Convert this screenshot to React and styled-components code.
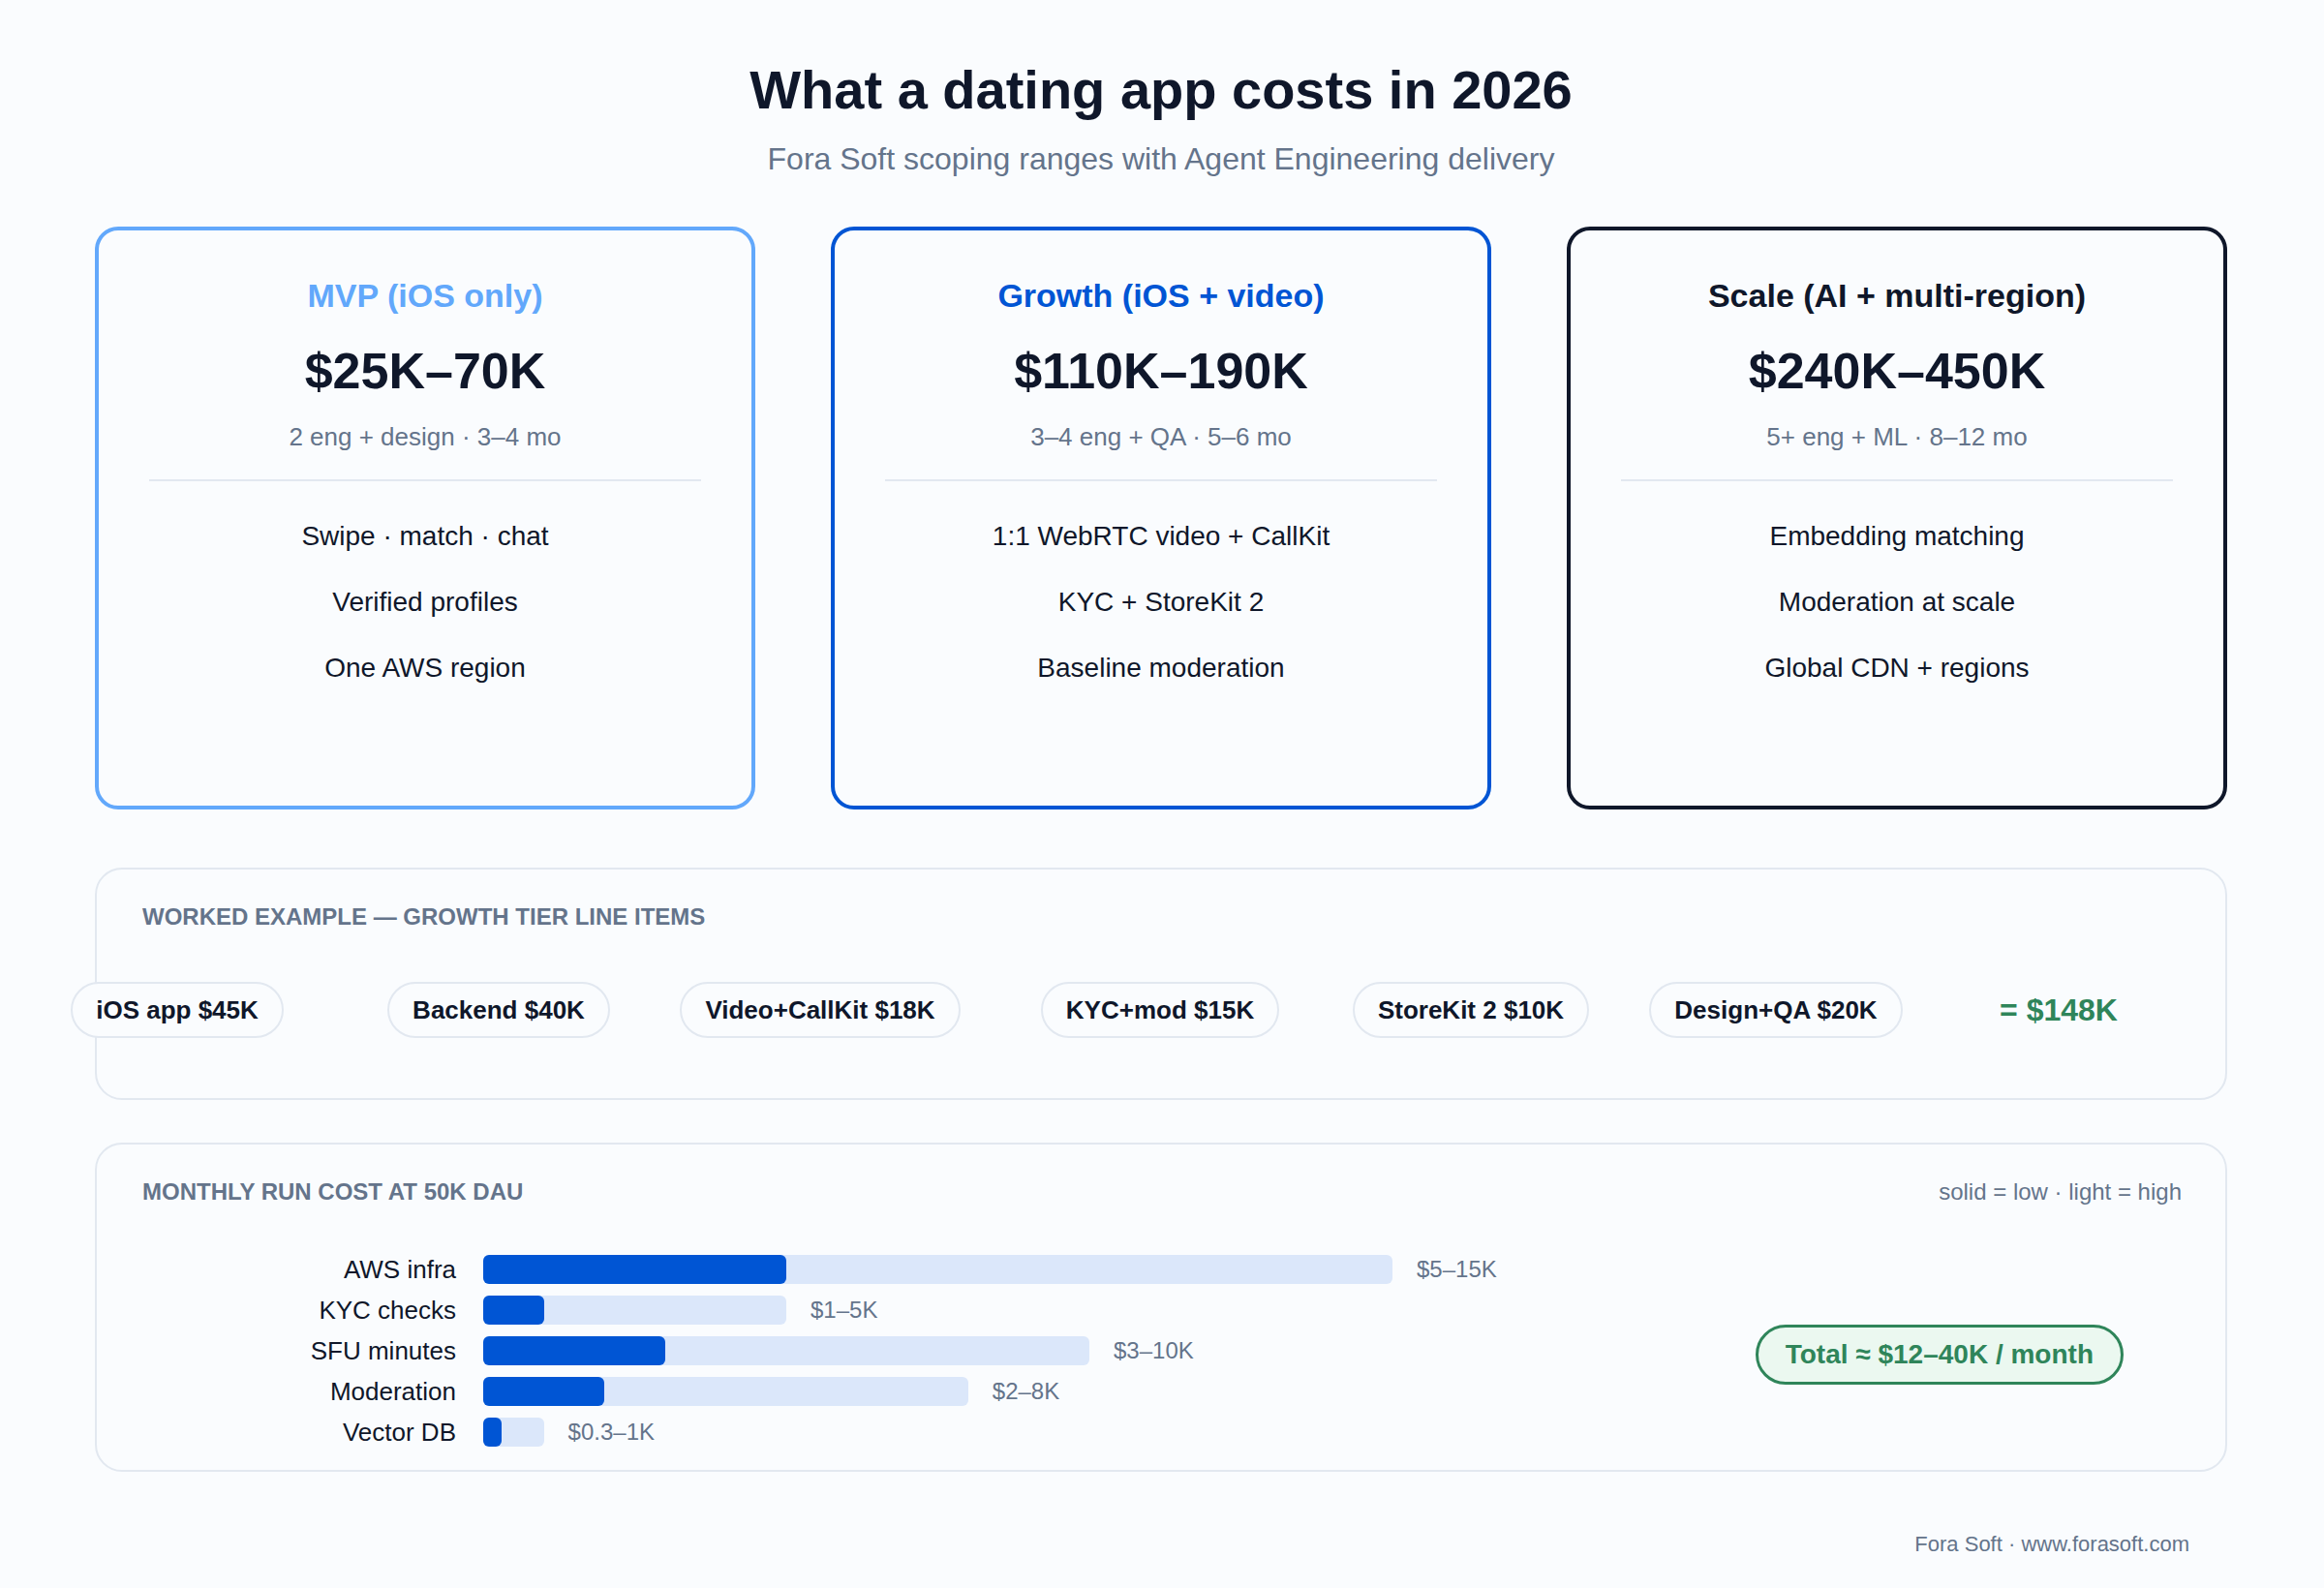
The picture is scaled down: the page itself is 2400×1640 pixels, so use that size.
import React from "react";
import styled, { createGlobalStyle } from "styled-components";

const GlobalStyle = createGlobalStyle`
  html, body {
    margin: 0;
    padding: 0;
    background: #fafcfe;
  }
  body {
    font-family: "Liberation Sans", Arial, sans-serif;
    color: #0f172a;
  }
`;

const Page = styled.div`
  width: 2400px;
  min-height: 1640px;
  box-sizing: border-box;
  padding: 61px 100px 0 98px;
`;

const Header = styled.header`
  text-align: center;
`;

const Title = styled.h1`
  margin: 0;
  font-size: 56px;
  line-height: 64px;
  font-weight: 700;
  color: #0f172a;
`;

const Subtitle = styled.p`
  margin: 19px 0 0;
  font-size: 32px;
  line-height: 40px;
  color: #64748b;
`;

const Tiers = styled.div`
  display: grid;
  grid-template-columns: repeat(3, 682px);
  gap: 78px;
  margin-top: 50px;
`;

const Card = styled.div`
  height: 602px;
  box-sizing: border-box;
  border: 4px solid ${(p) => p.$accent};
  border-radius: 24px;
  padding-top: 47px;
  display: flex;
  flex-direction: column;
  align-items: center;
  text-align: center;
`;

const CardTitle = styled.div`
  font-size: 34px;
  line-height: 40px;
  font-weight: 700;
  color: ${(p) => p.$accent};
`;

const Price = styled.div`
  margin-top: 28px;
  font-size: 52px;
  line-height: 60px;
  font-weight: 700;
  color: #0f172a;
`;

const Meta = styled.div`
  margin-top: 22px;
  font-size: 26px;
  line-height: 32px;
  color: #64748b;
`;

const Divider = styled.div`
  align-self: stretch;
  height: 2px;
  margin: 28px 52px 0;
  background: #e2e8f0;
`;

const Features = styled.div`
  margin-top: 39px;
  display: flex;
  flex-direction: column;
  gap: 32px;
`;

const Feature = styled.div`
  font-size: 28px;
  line-height: 36px;
  color: #0f172a;
`;

const Panel = styled.section`
  box-sizing: border-box;
  height: ${(p) => p.$height}px;
  margin-top: ${(p) => p.$gap}px;
  border: 2px solid #e2e8f0;
  border-radius: 28px;
  padding: 35px 45px 0 47px;
`;

const PanelHead = styled.div`
  display: flex;
  justify-content: space-between;
  align-items: center;
`;

const PanelLabel = styled.div`
  font-size: 24px;
  line-height: 28px;
  font-weight: 700;
  color: #64748b;
  text-transform: uppercase;
`;

const Legend = styled.div`
  font-size: 24px;
  line-height: 28px;
  color: #64748b;
`;

const PillRow = styled.div`
  margin-top: 53px;
  margin-left: -130px;
  display: grid;
  grid-template-columns: 332px 332px 332px 370px 272px 358px 226px;
  align-items: center;
`;

const Pill = styled.div`
  justify-self: center;
  height: 58px;
  box-sizing: border-box;
  padding: 0 24px;
  display: flex;
  align-items: center;
  border: 2px solid #e2e8f0;
  border-radius: 29px;
  background: #fafcfe;
  font-size: 26px;
  font-weight: 700;
  color: #0f172a;
  white-space: nowrap;
`;

const Sum = styled.div`
  justify-self: center;
  font-size: 32px;
  font-weight: 700;
  color: #2f855a;
  white-space: nowrap;
`;

const CostBody = styled.div`
  margin-top: 45px;
  display: flex;
  align-items: center;
`;

const Chart = styled.div`
  display: flex;
  flex-direction: column;
`;

const BarRow = styled.div`
  height: 42px;
  display: flex;
  align-items: center;
`;

const BarLabel = styled.div`
  width: 324px;
  text-align: right;
  font-size: 26px;
  line-height: 30px;
  color: #0f172a;
`;

const Track = styled.div`
  position: relative;
  margin-left: 28px;
  width: ${(p) => p.$w}px;
  height: 30px;
  border-radius: 6px;
  background: #dbe7fa;
`;

const Fill = styled.div`
  width: ${(p) => p.$w}px;
  height: 100%;
  border-radius: 6px;
  background: #0055d4;
`;

const BarValue = styled.div`
  margin-left: 25px;
  font-size: 24px;
  line-height: 28px;
  color: #64748b;
`;

const TotalPill = styled.div`
  margin: 8px 60px 0 auto;
  height: 62px;
  box-sizing: border-box;
  padding: 0 28px;
  display: flex;
  align-items: center;
  border: 3px solid #2f855a;
  border-radius: 31px;
  background: #ebf8f0;
  font-size: 28px;
  font-weight: 700;
  color: #2f855a;
  white-space: nowrap;
`;

const Footer = styled.footer`
  margin-top: 61px;
  padding-right: 39px;
  text-align: right;
  font-size: 22px;
  line-height: 28px;
  color: #64748b;
`;

const tiers = [
  {
    name: "MVP (iOS only)",
    accent: "#62a8fb",
    price: "$25K–70K",
    meta: "2 eng + design · 3–4 mo",
    features: ["Swipe · match · chat", "Verified profiles", "One AWS region"],
  },
  {
    name: "Growth (iOS + video)",
    accent: "#0055d4",
    price: "$110K–190K",
    meta: "3–4 eng + QA · 5–6 mo",
    features: ["1:1 WebRTC video + CallKit", "KYC + StoreKit 2", "Baseline moderation"],
  },
  {
    name: "Scale (AI + multi-region)",
    accent: "#0f172a",
    price: "$240K–450K",
    meta: "5+ eng + ML · 8–12 mo",
    features: ["Embedding matching", "Moderation at scale", "Global CDN + regions"],
  },
];

const lineItems = [
  "iOS app $45K",
  "Backend $40K",
  "Video+CallKit $18K",
  "KYC+mod $15K",
  "StoreKit 2 $10K",
  "Design+QA $20K",
];

// px per $1K of monthly cost
const PER_K = 62.6;

const costs = [
  { name: "AWS infra", low: 5, high: 15, text: "$5–15K" },
  { name: "KYC checks", low: 1, high: 5, text: "$1–5K" },
  { name: "SFU minutes", low: 3, high: 10, text: "$3–10K" },
  { name: "Moderation", low: 2, high: 8, text: "$2–8K" },
  { name: "Vector DB", low: 0.3, high: 1, text: "$0.3–1K" },
];

export default function App() {
  return (
    <Page>
      <GlobalStyle />
      <Header>
        <Title>What a dating app costs in 2026</Title>
        <Subtitle>Fora Soft scoping ranges with Agent Engineering delivery</Subtitle>
      </Header>

      <Tiers>
        {tiers.map((t) => (
          <Card key={t.name} $accent={t.accent}>
            <CardTitle $accent={t.accent}>{t.name}</CardTitle>
            <Price>{t.price}</Price>
            <Meta>{t.meta}</Meta>
            <Divider />
            <Features>
              {t.features.map((f) => (
                <Feature key={f}>{f}</Feature>
              ))}
            </Features>
          </Card>
        ))}
      </Tiers>

      <Panel $height={240} $gap={60}>
        <PanelLabel>Worked example — Growth tier line items</PanelLabel>
        <PillRow>
          {lineItems.map((item) => (
            <Pill key={item}>{item}</Pill>
          ))}
          <Sum>= $148K</Sum>
        </PillRow>
      </Panel>

      <Panel $height={340} $gap={44}>
        <PanelHead>
          <PanelLabel>Monthly run cost at 50K DAU</PanelLabel>
          <Legend>solid = low · light = high</Legend>
        </PanelHead>
        <CostBody>
          <Chart>
            {costs.map((c) => (
              <BarRow key={c.name}>
                <BarLabel>{c.name}</BarLabel>
                <Track $w={c.high * PER_K}>
                  <Fill $w={c.low * PER_K} />
                </Track>
                <BarValue>{c.text}</BarValue>
              </BarRow>
            ))}
          </Chart>
          <TotalPill>Total ≈ $12–40K / month</TotalPill>
        </CostBody>
      </Panel>

      <Footer>Fora Soft · www.forasoft.com</Footer>
    </Page>
  );
}
